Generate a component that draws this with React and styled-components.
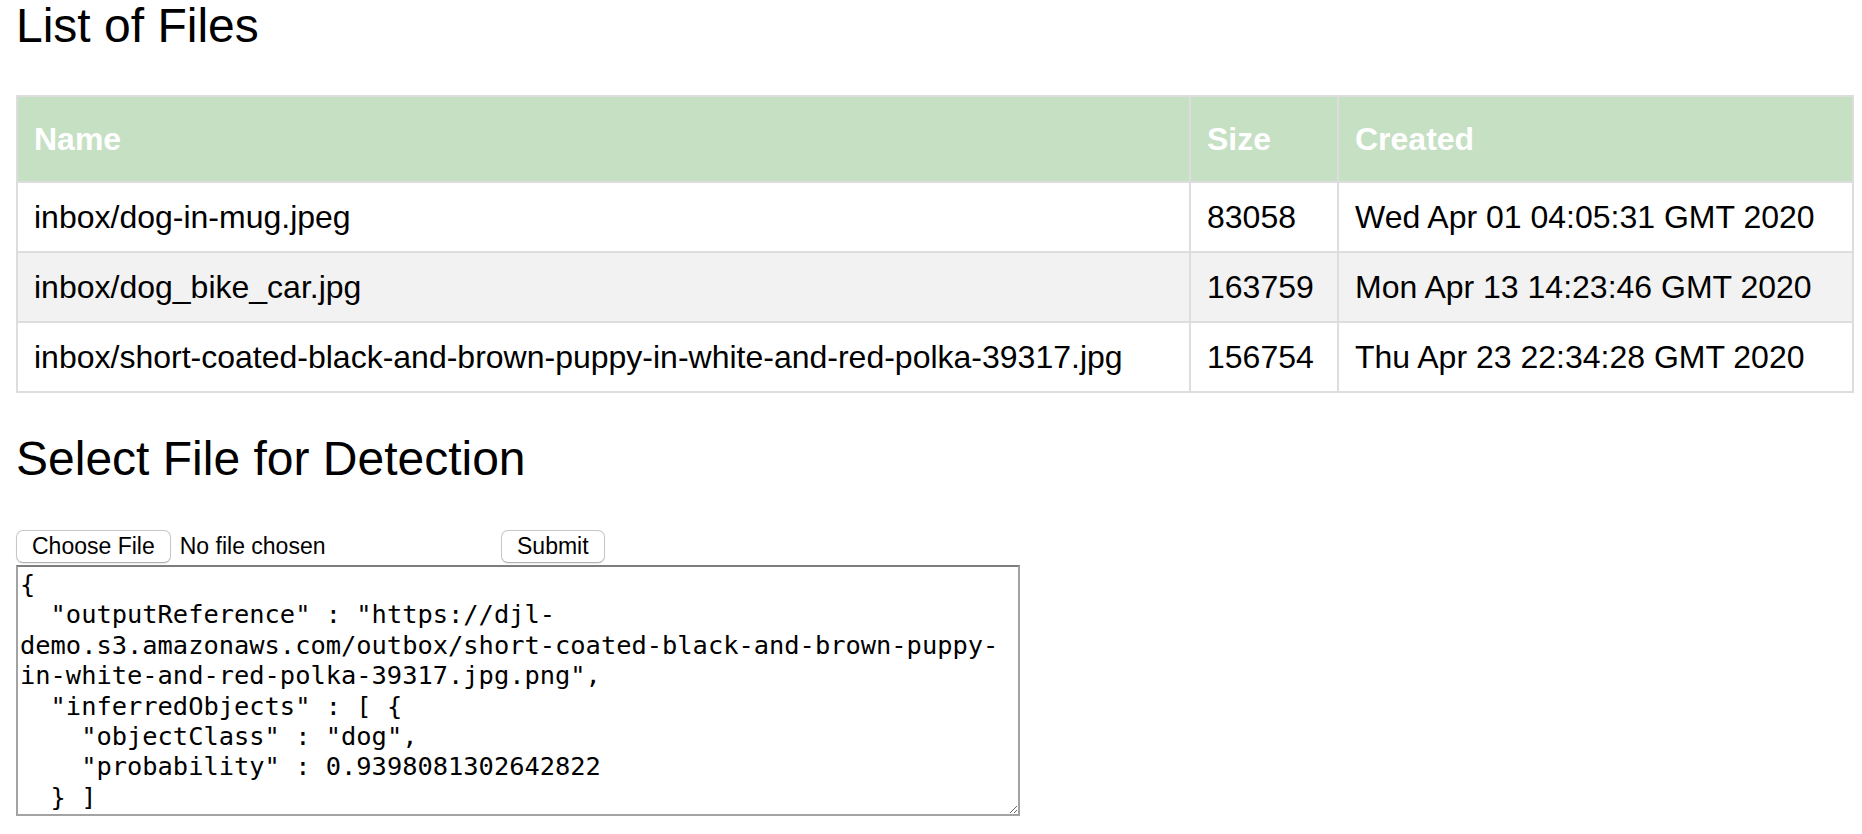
import React from 'react';
import styled, { createGlobalStyle } from 'styled-components';

const GlobalStyle = createGlobalStyle`
  html, body {
    margin: 0;
    padding: 0;
    background: #fff;
  }
  body {
    font-family: 'Liberation Sans', Arial, Helvetica, sans-serif;
    color: #000;
  }
`;

const Page = styled.div`
  padding: 2px 8px 0 16px;
`;

const Title = styled.h2`
  margin: ${(p) => p.$top || 0}px 0 0;
  font-size: 48px;
  line-height: 48px;
  font-weight: normal;
`;

const Table = styled.table`
  width: 100%;
  margin-top: 45px;
  border-collapse: collapse;
  table-layout: fixed;
  font-size: 32px;
  line-height: 36px;
`;

const HeadCell = styled.th`
  box-sizing: border-box;
  width: ${(p) => (p.$width ? `${p.$width}px` : 'auto')};
  padding: 24px 16px;
  border: 2px solid #ddd;
  background: #c6e0c4;
  color: #fff;
  text-align: left;
  font-weight: bold;
`;

const Row = styled.tr`
  background: ${(p) => (p.$even ? '#f2f2f2' : '#fff')};
`;

const Cell = styled.td`
  padding: 16px;
  border: 2px solid #ddd;
  white-space: nowrap;
  overflow: hidden;
`;

const FormRow = styled.div`
  display: flex;
  align-items: center;
  gap: 9px;
  margin-top: 47px;
`;

const FilePicker = styled.div`
  width: 476px;
  display: flex;
  align-items: center;
  gap: 9px;
`;

const Button = styled.button`
  height: 33px;
  padding: 0 15px;
  border: 1px solid #c6c6c6;
  border-bottom-color: #b0b0b0;
  border-radius: 7px;
  background: #fff;
  box-shadow: 0 1px 1px rgba(0, 0, 0, 0.08);
  font-family: 'Liberation Sans', Arial, Helvetica, sans-serif;
  font-size: 23px;
  color: #000;
`;

const FileStatus = styled.span`
  font-size: 23px;
`;

const Output = styled.textarea`
  display: block;
  box-sizing: border-box;
  width: 1004px;
  height: 251px;
  margin-top: 2px;
  padding: 2px;
  border: 2px solid #a3a3a3;
  border-top-color: #7c7c7c;
  font-family: 'DejaVu Sans Mono', 'Liberation Mono', monospace;
  font-size: 25.4px;
  line-height: 30.4px;
  color: #000;
  overflow: hidden;
  resize: both;
  outline: none;
`;

const files = [
  { name: 'inbox/dog-in-mug.jpeg', size: 83058, created: 'Wed Apr 01 04:05:31 GMT 2020' },
  { name: 'inbox/dog_bike_car.jpg', size: 163759, created: 'Mon Apr 13 14:23:46 GMT 2020' },
  {
    name: 'inbox/short-coated-black-and-brown-puppy-in-white-and-red-polka-39317.jpg',
    size: 156754,
    created: 'Thu Apr 23 22:34:28 GMT 2020',
  },
];

const result = `{
  "outputReference" : "https://djl-demo.s3.amazonaws.com/outbox/short-coated-black-and-brown-puppy-in-white-and-red-polka-39317.jpg.png",
  "inferredObjects" : [ {
    "objectClass" : "dog",
    "probability" : 0.9398081302642822
  } ]
}`;

function App() {
  return (
    <Page>
      <GlobalStyle />
      <Title>List of Files</Title>
      <Table>
        <thead>
          <tr>
            <HeadCell $width={1173}>Name</HeadCell>
            <HeadCell $width={148}>Size</HeadCell>
            <HeadCell>Created</HeadCell>
          </tr>
        </thead>
        <tbody>
          {files.map((f, i) => (
            <Row key={f.name} $even={i % 2 === 1}>
              <Cell>{f.name}</Cell>
              <Cell>{f.size}</Cell>
              <Cell>{f.created}</Cell>
            </Row>
          ))}
        </tbody>
      </Table>
      <Title $top={42}>Select File for Detection</Title>
      <FormRow>
        <FilePicker>
          <Button type="button">Choose File</Button>
          <FileStatus>No file chosen</FileStatus>
        </FilePicker>
        <Button type="button">Submit</Button>
      </FormRow>
      <Output defaultValue={result} spellCheck={false} />
    </Page>
  );
}

export default App;
